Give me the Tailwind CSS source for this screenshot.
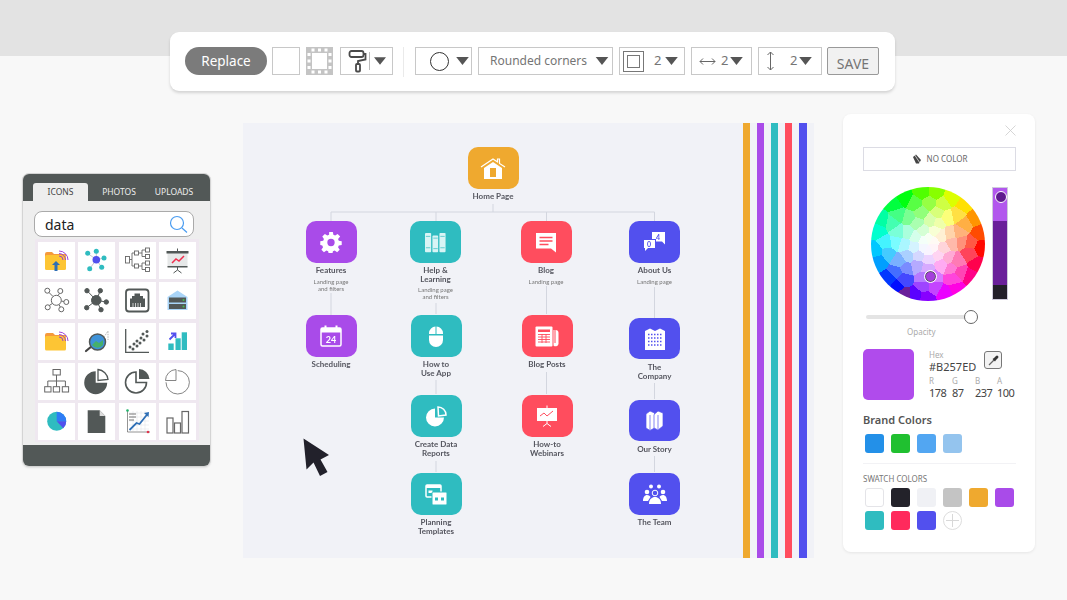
<!DOCTYPE html>
<html lang="en">
<head>
  <meta charset="UTF-8" />
  <title>Infographic editor</title>
  <script src="https://cdn.jsdelivr.net/npm/@tailwindcss/browser@4"></script>
</head>
<body class="relative w-[1067px] h-[600px] overflow-hidden bg-[#f8f8f8] font-['Noto_Sans',sans-serif]">
  <div class="h-[56px] bg-[#e3e3e3]"></div>

  <!-- Toolbar -->
  <div class="absolute left-[170px] top-[32px] w-[725px] h-[59px] pl-[15px] pt-[15px] flex items-start bg-white rounded-[9px] shadow-[0_2px_3px_rgba(0,0,0,0.15)] text-[#757575] text-[12px]">
    <div class="w-[82px] h-[28px] rounded-full bg-[#7b7b7b] text-white text-[13.500px] flex items-center justify-center">Replace</div>
    <div class="ml-[5px] w-[28px] h-[28px] border border-[#c8c8c8]"></div>
    <svg class="ml-[6px] w-[27px] h-[28px]" viewBox="0 0 27 28">
      <rect width="27" height="28" fill="#c4c4c4"/>
      <rect x="6" y="6" width="15" height="16" fill="#fff"/>
      <path d="M5.500 1.500h3v3h-3zM12 1.500h3v3h-3zM18.500 1.500h3v3h-3zM5.500 23.500h3v3h-3zM12 23.500h3v3h-3zM18.500 23.500h3v3h-3zM1.500 6h3v3h-3zM1.500 12.500h3v3h-3zM1.500 19h3v3h-3zM22.500 6h3v3h-3zM22.500 12.500h3v3h-3zM22.500 19h3v3h-3z" fill="#fff"/>
    </svg>
    <div class="ml-[7px] w-[53px] h-[28px] border border-[#c8c8c8] flex items-center">
      <svg class="ml-[7px] w-[20px] h-[24px]" viewBox="0 0 20 24" fill="none" stroke="#4a4a4a" stroke-width="1.800">
        <rect x="1.500" y="2" width="14" height="6" rx="2"/>
        <path d="M15.500 5h2v5.500l-7.500 1.500v3"/>
        <rect x="8" y="15" width="4" height="7.500" rx="1"/>
      </svg>
      <div class="ml-[1px] w-px h-[18px] bg-[#bbb]"></div>
      <svg class="ml-[4px] w-[12px] h-[8px]" viewBox="0 0 11 7"><path d="M0 0h11L5.500 7z" fill="#555"/></svg>
    </div>
    <div class="ml-[10px] w-px h-[30px] bg-[#eaeaea]"></div>
    <div class="ml-[11px] w-[57px] h-[28px] border border-[#c8c8c8] flex items-center">
      <div class="ml-[14px] w-[19px] h-[19px] rounded-full border-[1.500px] border-[#333]"></div>
      <svg class="ml-[7px] w-[13px] h-[8px]" viewBox="0 0 11 7"><path d="M0 0h11L5.500 7z" fill="#555"/></svg>
    </div>
    <div class="ml-[6px] w-[135px] h-[28px] border border-[#c8c8c8] flex items-center justify-between pl-[11px] pr-[3px] whitespace-nowrap">
      <span>Rounded corners</span>
      <svg class="w-[14px] h-[8px]" viewBox="0 0 11 7"><path d="M0 0h11L5.500 7z" fill="#555"/></svg>
    </div>
    <div class="ml-[6px] w-[66px] h-[28px] border border-[#c8c8c8] flex items-center">
      <div class="ml-[3px] w-[21px] h-[21px] border border-[#777] p-[3px]"><div class="w-full h-full border border-[#777]"></div></div>
      <span class="ml-[10px] text-[13px]">2</span>
      <svg class="ml-[4px] w-[13px] h-[8px]" viewBox="0 0 11 7"><path d="M0 0h11L5.500 7z" fill="#555"/></svg>
    </div>
    <div class="ml-[6px] w-[61px] h-[28px] border border-[#c8c8c8] flex items-center">
      <svg class="ml-[7px] w-[17px] h-[9px]" viewBox="0 0 17 9" fill="none" stroke="#666"><path d="M1 4.500h15M4 1.500l-3 3 3 3M13 1.500l3 3-3 3"/></svg>
      <span class="ml-[5px] text-[13px]">2</span>
      <svg class="ml-[2px] w-[13px] h-[8px]" viewBox="0 0 11 7"><path d="M0 0h11L5.500 7z" fill="#555"/></svg>
    </div>
    <div class="ml-[6px] w-[64px] h-[28px] border border-[#c8c8c8] flex items-center">
      <svg class="ml-[7px] w-[9px] h-[20px]" viewBox="0 0 9 20" fill="none" stroke="#666"><path d="M4.500 1v18M1.500 4l3-3 3 3M1.500 16l3 3 3-3"/></svg>
      <span class="ml-[15px] text-[13px]">2</span>
      <svg class="ml-[2px] w-[13px] h-[8px]" viewBox="0 0 11 7"><path d="M0 0h11L5.500 7z" fill="#555"/></svg>
    </div>
    <div class="ml-[5px] w-[52px] h-[28px] border border-[#999] rounded-[2px] bg-[#f1f1f1] flex items-end justify-center text-[14px] leading-[20px]">SAVE</div>
  </div>

  <!-- Icon panel -->
  <div class="absolute left-[22px] top-[173px] w-[189px] h-[294px] rounded-[7px] overflow-hidden bg-[#eeeeee] border border-[#d4d4d4] flex flex-col shadow-[0_1px_2px_rgba(0,0,0,0.1)]">
    <div class="h-[27px] bg-[#525857] flex items-end pl-[10px] text-[8.500px] text-[#eee]">
      <div class="w-[55px] h-[18px] bg-[#eeeeee] text-[#444] rounded-t-[3px] flex items-center justify-center">ICONS</div>
      <div class="w-[62px] h-[18px] flex items-center justify-center">PHOTOS</div>
      <div class="w-[48px] h-[18px] flex items-center justify-center">UPLOADS</div>
    </div>
    <div class="mt-[10px] ml-[11px] w-[160px] h-[26px] bg-white border border-[#aaa] rounded-[8px] flex items-center justify-between pl-[10px] pr-[5px] text-[14px] text-[#222]">
      <span>data</span>
      <svg class="w-[19px] h-[19px]" viewBox="0 0 19 19" fill="none" stroke="#4a9cf0" stroke-width="1.200"><circle cx="8" cy="8" r="6.500"/><path d="M13 13l5 4.500"/></svg>
    </div>
    <div class="mt-[2px] ml-[12px] w-[164px] h-[203px] bg-[#efe8f0] pt-[3px] pl-[3px] grid grid-cols-[37px_37px_37px_37px] grid-rows-[37px_37px_37px_37px_37px] gap-[3.300px]">
      <!-- folder upload -->
      <div class="bg-white"><svg viewBox="0 0 37 37"><path d="M7 12a2 2 0 0 1 2-2h5l2 2h12v3H7z" fill="#f59a3c"/><rect x="7" y="13" width="21" height="15" rx="1.500" fill="#fdc534"/><path d="M21 14a4 4 0 0 1 4 4M21 11.500a6.500 6.500 0 0 1 6.500 6.500M21 9a9 9 0 0 1 9 9" fill="none" stroke="#9333d6" stroke-width="0.900"/><path d="M18 19l4 4h-2.500v6h-3v-6H14z" fill="#2f6fb5"/></svg></div>
      <!-- network -->
      <div class="bg-white"><svg viewBox="0 0 37 37"><path d="M18.300 17.700L18.300 9.300M18.300 17.700L9.700 11.300M18.300 17.700L26 16M18.300 17.700L11.700 26.700M18.300 17.700L23.700 25.300" stroke="#c5c5cc" stroke-width="1"/><circle cx="18.300" cy="9.300" r="2.500" fill="#2fbcc0"/><circle cx="9.700" cy="11.300" r="2.500" fill="#2fbcc0"/><circle cx="26" cy="16" r="2.500" fill="#2fbcc0"/><circle cx="11.700" cy="26.700" r="2.500" fill="#2fbcc0"/><circle cx="23.700" cy="25.300" r="2.500" fill="#2fbcc0"/><circle cx="18.300" cy="17.700" r="3.800" fill="#5250ee"/></svg></div>
      <!-- tree -->
      <div class="bg-white"><svg viewBox="0 0 37 37" fill="none" stroke="#666" stroke-width="0.900"><rect x="6.500" y="14.500" width="4" height="6.500"/><rect x="15.500" y="9" width="4" height="4"/><rect x="15.500" y="22" width="4" height="4"/><rect x="26.500" y="6" width="4" height="4"/><rect x="26.500" y="12.500" width="4" height="4"/><rect x="26.500" y="19" width="4" height="4"/><rect x="26.500" y="25.500" width="4" height="4"/><path d="M10.500 17.500h2.500v-6.500h2.500M13 17.500v6.500h2.500M19.500 11h3.500M23 8h3.500M23 14.500h3.500M23 8v6.500M19.500 24h3.500M23 21h3.500M23 27.500h3.500M23 21v6.500"/></svg></div>
      <!-- board -->
      <div class="bg-white"><svg viewBox="0 0 37 37"><rect x="8.500" y="10" width="20" height="15" fill="#e6e8e8"/><rect x="7.500" y="9" width="22" height="2.500" fill="#525857"/><rect x="8.500" y="24" width="20" height="1.500" fill="#525857"/><path d="M18.500 9V6.500M18.500 25v3M18.500 28l-4 3M18.500 28l4 3" stroke="#525857" fill="none"/><path d="M13 21l4-4 3 2 5-5" stroke="#f0304f" stroke-width="1.500" fill="none"/></svg></div>
      <!-- hub outline -->
      <div class="bg-white"><svg viewBox="0 0 37 37" fill="none" stroke="#666" stroke-width="1"><circle cx="18.300" cy="18.300" r="5"/><circle cx="9.300" cy="8.700" r="2.500"/><circle cx="22.300" cy="9" r="2.500"/><circle cx="28.300" cy="20" r="2.500"/><circle cx="23.300" cy="27.300" r="2.500"/><circle cx="9.700" cy="25.300" r="2.500"/><path d="M15 14.500l-4-4M20 13.500l1.500-2M23.300 19l2.500.500M21 22.500l1.300 2.500M14.300 21.500l-3 2"/></svg></div>
      <!-- hub filled -->
      <div class="bg-white"><svg viewBox="0 0 37 37" fill="#525857" stroke="#525857" stroke-width="1"><path d="M18.300 18.300L9 8.700M18.300 18.300L22.300 8.700M18.300 18.300L28.300 20M18.300 18.300L23 27.700M18.300 18.300L8.700 25.700"/><circle cx="18.300" cy="18.300" r="4.800"/><circle cx="9" cy="8.700" r="2.200"/><circle cx="22.300" cy="8.700" r="2.200"/><circle cx="28.300" cy="20" r="2.200"/><circle cx="23" cy="27.700" r="2.200"/><circle cx="8.700" cy="25.700" r="2.200"/></svg></div>
      <!-- ethernet -->
      <div class="bg-white"><svg viewBox="0 0 37 37"><rect x="7" y="7.500" width="22.500" height="22" rx="3" fill="none" stroke="#525857" stroke-width="1.800"/><path d="M15.500 11.500h5.500v2.500h3v2.500h2V25h-15v-8.500h2V14h2.500z" fill="#525857"/><path d="M14 21v4M16.500 21v4M19 21v4M21.500 21v4" stroke="#fff" stroke-width="0.700"/></svg></div>
      <!-- server -->
      <div class="bg-white"><svg viewBox="0 0 37 37"><path d="M8.500 15l10-6.500 10 6.500v13h-20z" fill="#a9d4f7"/><rect x="10" y="15.500" width="17" height="5" fill="#525857"/><rect x="10" y="22" width="17" height="5" fill="#525857"/><circle cx="24.500" cy="18" r="1" fill="#43c04b"/><circle cx="24.500" cy="24.500" r="1" fill="#43c04b"/></svg></div>
      <!-- folder -->
      <div class="bg-white"><svg viewBox="0 0 37 37"><path d="M7 12a2 2 0 0 1 2-2h6l2 2h11v3H7z" fill="#f59a3c"/><rect x="7" y="13" width="21" height="14.500" rx="1.500" fill="#fdc534"/><path d="M21 14a4 4 0 0 1 4 4M21 11.500a6.500 6.500 0 0 1 6.500 6.500M21 9a9 9 0 0 1 9 9" fill="none" stroke="#9333d6" stroke-width="0.900"/></svg></div>
      <!-- magnifier -->
      <div class="bg-white"><svg viewBox="0 0 37 37"><path d="M14 23l-6 5" stroke="#444" stroke-width="2.200" stroke-linecap="round"/><circle cx="19.500" cy="19" r="8" fill="#3e92d8" stroke="#525857" stroke-width="1.500"/><path d="M14 22l4-4 3 2 4-3v5a7 7 0 0 1-11 0z" fill="#46b06a"/><path d="M26 14l4-6v9" fill="none" stroke="#999" stroke-width="0.700" stroke-dasharray="1.500 1"/></svg></div>
      <!-- scatter -->
      <div class="bg-white"><svg viewBox="0 0 37 37"><path d="M6.700 6v23.300H30" fill="none" stroke="#525857" stroke-width="1.300"/><g fill="#525857"><circle cx="11" cy="24" r="1.500"/><circle cx="14" cy="26" r="1.500"/><circle cx="15" cy="21" r="1.500"/><circle cx="18" cy="23" r="1.500"/><circle cx="18" cy="18" r="1.500"/><circle cx="21" cy="20" r="1.500"/><circle cx="22" cy="15" r="1.500"/><circle cx="25" cy="17" r="1.500"/><circle cx="24" cy="11" r="1.500"/><circle cx="28" cy="13" r="1.500"/><circle cx="28" cy="8.500" r="1.500"/></g></svg></div>
      <!-- bars up -->
      <div class="bg-white"><svg viewBox="0 0 37 37"><rect x="9.300" y="20.500" width="5.400" height="6.500" fill="#2fbcc0"/><rect x="16.500" y="15.300" width="5.200" height="11.700" fill="#2fbcc0"/><rect x="22.700" y="9.300" width="5.300" height="17.700" fill="#2fbcc0"/><path d="M10.500 16.500l5-5M12 10.500h4.500v4.500" fill="none" stroke="#5250ee" stroke-width="1.800"/></svg></div>
      <!-- org chart -->
      <div class="bg-white"><svg viewBox="0 0 37 37" fill="none" stroke="#666" stroke-width="1"><rect x="15" y="6.500" width="7.300" height="5.500"/><rect x="6.700" y="23.700" width="6.300" height="5.300"/><rect x="15.300" y="23.700" width="6.300" height="5.300"/><rect x="24.300" y="23.700" width="6.300" height="5.300"/><path d="M18.500 12v11.700M9.800 23.700V18h17.600v5.700"/></svg></div>
      <!-- pie filled -->
      <div class="bg-white"><svg viewBox="0 0 37 37"><path d="M17.700 8.200A11.500 11.500 0 1 0 29.200 19.700H17.700z" fill="#525857"/><path d="M20 6.500A11 11 0 0 1 30 16.500L20 17.500z" fill="#fff" stroke="#525857" stroke-width="1.300"/></svg></div>
      <!-- pie outline -->
      <div class="bg-white"><svg viewBox="0 0 37 37"><path d="M17 9a10.500 10.500 0 1 0 10.500 10.500H17z" fill="#fff" stroke="#525857" stroke-width="1.600"/><path d="M20 6A11 11 0 0 1 30.500 16H20z" fill="#525857"/></svg></div>
      <!-- pie thin -->
      <div class="bg-white"><svg viewBox="0 0 37 37" fill="none" stroke="#777" stroke-width="0.900"><path d="M18.700 7.600a11.700 11.700 0 1 1-11.700 11.700"/><path d="M17 6.500V17.500H6.500A11 11 0 0 1 17 6.500z"/></svg></div>
      <!-- pie colour -->
      <div class="bg-white"><svg viewBox="0 0 37 37"><circle cx="18.700" cy="18.300" r="9.500" fill="#2fbcc0"/><path d="M18.700 18.300V8.800a9.500 9.500 0 0 1 9.500 9.500z" fill="#2e7cf6"/><path d="M18.700 18.300h9.500a9.500 9.500 0 0 1-3 7z" fill="#5250ee"/></svg></div>
      <!-- document -->
      <div class="bg-white"><svg viewBox="0 0 37 37"><path d="M9.700 7.300h12l5.600 5.600V30H9.700z" fill="#525857"/><path d="M21.700 7.300v5.600h5.600z" fill="#ddd"/></svg></div>
      <!-- chart trend -->
      <div class="bg-white"><svg viewBox="0 0 37 37"><path d="M10 10h20M10 14h20M10 18h20M10 22h20M10 26h20M14 8v20M18 8v20M22 8v20M26 8v20" stroke="#dde3e6" stroke-width="0.500"/><path d="M8.500 8v21H31" fill="none" stroke="#666" stroke-width="0.700"/><path d="M10 11h7M10 14h7M10 17h5" stroke="#666" stroke-width="0.900"/><path d="M10.500 27l7-7 3 1 8-10" fill="none" stroke="#2f6fb5" stroke-width="1.800"/><path d="M25 10l5-1-.5 5z" fill="#2f6fb5"/><circle cx="8.500" cy="7.500" r="1.300" fill="#1fb36b"/><circle cx="29" cy="29" r="1.300" fill="#e0344c"/></svg></div>
      <!-- bars outline -->
      <div class="bg-white"><svg viewBox="0 0 37 37" fill="none" stroke="#666" stroke-width="1.200"><rect x="8" y="15" width="6" height="15"/><rect x="15.500" y="20" width="6" height="10"/><rect x="23" y="8.500" width="6.500" height="21.500"/></svg></div>
    </div>
    <div class="mt-auto h-[21px] bg-[#525857]"></div>
  </div>

  <!-- Canvas -->
  <div class="absolute left-[243px] top-[123px] w-[571px] h-[435px] bg-[#f1f2f7] text-[#55565f] font-['Lato',sans-serif] text-[8px] leading-[8.700px] font-bold text-center blur-[0.35px]">
    <svg class="absolute inset-0 w-[571px] h-[435px]" viewBox="0 0 571 435" fill="none" stroke="#d3d6df" stroke-width="1">
      <path d="M250 81v8M88 98V89H411.500V98M193 89v9M303.500 89v9"/>
      <path d="M88 170v22M193 180v11M303.500 163v28M411.500 164v31M193 257v14M303.500 249v22M411.500 260v16M193 338v11M411.500 333v16"/>
    </svg>
    <div class="absolute left-[499.500px] top-0 h-[435px] w-[64px] flex justify-between">
      <div class="w-[7px] bg-[#efa92f]"></div>
      <div class="w-[7px] bg-[#a94be9]"></div>
      <div class="w-[6.500px] bg-[#2fbcc0]"></div>
      <div class="w-[7px] bg-[#ff4d5e]"></div>
      <div class="w-[7.500px] bg-[#5250ee]"></div>
    </div>

    <!-- Home Page -->
    <div class="absolute left-[210px] top-[24px] w-[80px] flex flex-col items-center">
      <div class="w-[51px] h-[42px] rounded-[10px] bg-[#efa92f] flex items-center justify-center">
        <svg class="w-[26px] h-[23px]" viewBox="0 0 26 23"><path d="M1 10L13 2l4.500 3V2h2v4.500L25 10" fill="none" stroke="#fff" stroke-width="1.200"/><path d="M4 11l9-6 9 6v11H4z" fill="#fff"/><rect x="10" y="11" width="6" height="9" fill="#efa92f"/></svg>
      </div>
      <div class="mt-[3px]">Home Page</div>
    </div>
    <!-- Features -->
    <div class="absolute left-[48px] top-[98px] w-[80px] flex flex-col items-center">
      <div class="w-[51px] h-[42px] rounded-[10px] bg-[#a94be9] flex items-center justify-center">
        <svg class="w-[22px] h-[22px]" viewBox="0 0 24 24"><path fill="#fff" fill-rule="evenodd" d="M10 1h4l.6 3.200 1.900.8 2.700-1.800 2.800 2.800L19.700 8.700l.8 1.900 3.200.6v4l-3.200.6-.8 1.900 1.800 2.700-2.800 2.800-2.700-1.800-1.900.8-.6 2.800h-4l-.6-2.800-1.900-.8-2.700 1.800-2.800-2.800 1.800-2.700-.8-1.900L.3 15.200v-4l3.200-.6.8-1.900L2.500 6 5.300 3.200 8 5l1.900-.8zM12 8.500a4 4 0 1 0 0 8 4 4 0 0 0 0-8z"/></svg>
      </div>
      <div class="mt-[3px]">Features</div>
      <div class="mt-[3px] font-normal text-[6px] leading-[7px] text-[#777]">Landing page<br>and filters</div>
    </div>
    <!-- Help & Learning -->
    <div class="absolute left-[152.500px] top-[98px] w-[80px] flex flex-col items-center">
      <div class="w-[51px] h-[42px] rounded-[10px] bg-[#2fbcc0] flex items-center justify-center">
        <svg class="w-[21px] h-[21px]" viewBox="0 0 24 22" fill="#d9f4f5"><rect x="0" y="0" width="7" height="22" rx="1"/><rect x="8.500" y="3" width="6.500" height="19" rx="1"/><rect x="16.500" y="0" width="7" height="22" rx="1"/><path d="M1 4h5M1 17h5M9.500 6h5M9.500 18h5M17.500 4h5M17.500 17h5" stroke="#2fbcc0" stroke-width="0.800"/></svg>
      </div>
      <div class="mt-[3px]">Help &amp;<br>Learning</div>
      <div class="mt-[3px] font-normal text-[6px] leading-[7px] text-[#777]">Landing page<br>and filters</div>
    </div>
    <!-- Blog -->
    <div class="absolute left-[263px] top-[98px] w-[80px] flex flex-col items-center">
      <div class="w-[51px] h-[42px] rounded-[10px] bg-[#ff4d5e] flex items-center justify-center">
        <svg class="w-[22px] h-[21px]" viewBox="0 0 22 21"><path d="M1 1h20v15.500l0 4-5-4H1z" fill="#fff"/><path d="M4.500 5.500h13M4.500 9h13M4.500 12.500h9" stroke="#ff4d5e" stroke-width="1.500"/></svg>
      </div>
      <div class="mt-[3px]">Blog</div>
      <div class="mt-[3px] font-normal text-[6px] leading-[7px] text-[#777]">Landing page</div>
    </div>
    <!-- About Us -->
    <div class="absolute left-[371.500px] top-[98px] w-[80px] flex flex-col items-center">
      <div class="w-[51px] h-[42px] rounded-[10px] bg-[#5250ee] flex items-center justify-center">
        <svg class="w-[23px] h-[22px]" viewBox="0 0 23 22"><path d="M9 1h13v9.500l0 3-3-3h-6V8H9z" fill="#fff"/><path d="M1 9h11v8H5l-3 3v-3H1z" fill="#fff"/><text x="15" y="8.500" font-size="7" fill="#5250ee" text-anchor="middle" font-weight="700">4</text><text x="6" y="16" font-size="7" fill="#5250ee" text-anchor="middle" font-weight="700">0</text></svg>
      </div>
      <div class="mt-[3px]">About Us</div>
      <div class="mt-[3px] font-normal text-[6px] leading-[7px] text-[#777]">Landing page</div>
    </div>
    <!-- Scheduling -->
    <div class="absolute left-[48px] top-[192px] w-[80px] flex flex-col items-center">
      <div class="w-[51px] h-[42px] rounded-[10px] bg-[#a94be9] flex items-center justify-center">
        <svg class="w-[22px] h-[22px]" viewBox="0 0 22 22"><rect x="1" y="3" width="20" height="18" rx="1.500" fill="none" stroke="#fff" stroke-width="1.500"/><rect x="1" y="3" width="20" height="4.500" fill="#fff"/><rect x="4.500" y="0.500" width="2" height="4.500" fill="#fff"/><rect x="15.500" y="0.500" width="2" height="4.500" fill="#fff"/><text x="11" y="17.500" font-size="9" font-weight="700" fill="#fff" text-anchor="middle">24</text></svg>
      </div>
      <div class="mt-[3px]">Scheduling</div>
    </div>
    <!-- How to Use App -->
    <div class="absolute left-[153px] top-[192px] w-[80px] flex flex-col items-center">
      <div class="w-[51px] h-[42px] rounded-[10px] bg-[#2fbcc0] flex items-center justify-center">
        <svg class="w-[16px] h-[21px]" viewBox="0 0 16 21" fill="#fff"><path d="M1 8V7a7 7 0 0 1 6.500-6.500V8zM8.500 .5A7 7 0 0 1 15 7v1H8.500z"/><path d="M1 9.500h14V14a7 7 0 0 1-14 0z"/></svg>
      </div>
      <div class="mt-[3px]">How to<br>Use App</div>
    </div>
    <!-- Blog Posts -->
    <div class="absolute left-[264px] top-[192px] w-[80px] flex flex-col items-center">
      <div class="w-[51px] h-[42px] rounded-[10px] bg-[#ff4d5e] flex items-center justify-center">
        <svg class="w-[24px] h-[21px]" viewBox="0 0 24 21"><rect x="0.500" y="0.500" width="17" height="20" rx="1" fill="#fff"/><path d="M18.500 4h2a3 3 0 0 1 3 3v11a3 3 0 0 1-5 1.500z" fill="#fff"/><path d="M20 4v13" stroke="#ff4d5e"/><rect x="3" y="3.500" width="12" height="2.500" fill="#ff4d5e"/><path d="M3 8.500h12M3 11h12M3 13.500h12M3 16h12M7 8v9M11 8v9" stroke="#ff4d5e" stroke-width="0.900"/></svg>
      </div>
      <div class="mt-[3px]">Blog Posts</div>
    </div>
    <!-- The Company -->
    <div class="absolute left-[371.500px] top-[195px] w-[80px] flex flex-col items-center">
      <div class="w-[51px] h-[41px] rounded-[10px] bg-[#5250ee] flex items-center justify-center">
        <svg class="w-[20px] h-[22px]" viewBox="0 0 20 22"><path d="M0 3l5-2.500 5 2.500 5-2.500 5 2.500v19H0z" fill="#fff"/><path d="M3 6.500h14M3 10h14M3 13.500h14M3 17h14" stroke="#5250ee" stroke-width="1.500" stroke-dasharray="1.500 1.500"/></svg>
      </div>
      <div class="mt-[4px]">The<br>Company</div>
    </div>
    <!-- Create Data Reports -->
    <div class="absolute left-[153px] top-[272px] w-[80px] flex flex-col items-center">
      <div class="w-[51px] h-[42px] rounded-[10px] bg-[#2fbcc0] flex items-center justify-center">
        <svg class="w-[22px] h-[21px]" viewBox="0 0 22 21"><path d="M10 2.500a9 9 0 1 0 9 9h-9z" fill="#fff"/><path d="M13 1a8 8 0 0 1 8 8l-7.500 1z" fill="none" stroke="#fff" stroke-width="1.500"/></svg>
      </div>
      <div class="mt-[3px]">Create Data<br>Reports</div>
    </div>
    <!-- How-to Webinars -->
    <div class="absolute left-[264px] top-[272px] w-[80px] flex flex-col items-center">
      <div class="w-[51px] h-[42px] rounded-[10px] bg-[#ff4d5e] flex items-center justify-center">
        <svg class="w-[22px] h-[22px]" viewBox="0 0 22 22"><rect x="1" y="3" width="20" height="13" fill="#fff"/><path d="M11 3V0.500M11 16v2.500M11 18.500l-4 3M11 18.500l4 3" stroke="#fff" fill="none"/><path d="M4 11l4-3 3 3 6-5" stroke="#ff4d5e" fill="none"/></svg>
      </div>
      <div class="mt-[3px]">How-to<br>Webinars</div>
    </div>
    <!-- Our Story -->
    <div class="absolute left-[371.500px] top-[277px] w-[80px] flex flex-col items-center">
      <div class="w-[51px] h-[41px] rounded-[10px] bg-[#5250ee] flex items-center justify-center">
        <svg class="w-[19px] h-[21px]" viewBox="0 0 19 21" fill="#fff" stroke="#5250ee" stroke-width="0.700"><path d="M1 4l4-3 4.500 2v15L5 20.500 1 18z"/><path d="M9 4.500l4-3.500 5 2v13l-5 4-4-2z"/><path d="M5 5v15M13 5v14" fill="none"/></svg>
      </div>
      <div class="mt-[4px]">Our Story</div>
    </div>
    <!-- Planning Templates -->
    <div class="absolute left-[153px] top-[350px] w-[80px] flex flex-col items-center">
      <div class="w-[51px] h-[42px] rounded-[10px] bg-[#2fbcc0] flex items-center justify-center">
        <svg class="w-[22px] h-[21px]" viewBox="0 0 22 21"><rect x="1" y="1" width="15" height="12" rx="1" fill="none" stroke="#fff" stroke-width="1.500"/><rect x="1" y="1" width="15" height="3" fill="#fff"/><rect x="3.500" y="6.500" width="4" height="2.500" fill="#fff"/><rect x="7" y="8" width="15" height="13" rx="1" fill="#fff" stroke="#2fbcc0"/><rect x="10" y="13.500" width="3" height="3" fill="#2fbcc0"/><rect x="16" y="13.500" width="3" height="3" fill="#2fbcc0"/></svg>
      </div>
      <div class="mt-[3px]">Planning<br>Templates</div>
    </div>
    <!-- The Team -->
    <div class="absolute left-[371.500px] top-[350px] w-[80px] flex flex-col items-center">
      <div class="w-[51px] h-[42px] rounded-[10px] bg-[#5250ee] flex items-center justify-center">
        <svg class="w-[24px] h-[21px]" viewBox="0 0 24 21" fill="#fff"><circle cx="8" cy="2.500" r="2"/><circle cx="16" cy="2.500" r="2"/><circle cx="4" cy="8" r="2.300"/><circle cx="20" cy="8" r="2.300"/><circle cx="12" cy="9" r="2.800" fill="none" stroke="#fff"/><path d="M0 17c0-4 2-6 4-6s3 1 3.500 2L5 17zM24 17c0-4-2-6-4-6s-3 1-3.500 2L19 17z"/><path d="M6 20c0-5 3-7 6-7s6 2 6 7z"/></svg>
      </div>
      <div class="mt-[3px]">The Team</div>
    </div>
    <!-- Cursor -->
    <svg class="absolute left-[57px] top-[312px] w-[32px] h-[42px]" viewBox="0 0 32 42"><path d="M3.500 3.500L29 20l-8.500 4.500L27.500 37l-7.500 4-6.500-13.500L6.500 34.500z" fill="#22212b"/></svg>
  </div>

  <!-- Colour panel -->
  <div class="absolute left-[843px] top-[114px] w-[192px] h-[438px] px-[20px] rounded-[8px] bg-white shadow-[0_1px_3px_rgba(0,0,0,0.08)] text-[#444]">
    <svg class="absolute left-[162px] top-[11px] w-[11px] h-[11px]" viewBox="0 0 11 11" stroke="#ccc" stroke-width="0.800"><path d="M.5.5l10 10M10.500.5l-10 10"/></svg>
    <div class="mt-[33px] w-[153px] h-[24px] border border-[#dcdce4] flex items-center justify-center text-[8px] text-[#666]">
      <svg class="mr-[5px] w-[10px] h-[10px]" viewBox="0 0 10 10"><path d="M1 3l3-2.500L9 6 7 9.500H4z" fill="#444"/><path d="M2 0l6 9" stroke="#fff" stroke-width="0.700"/></svg>
      NO COLOR
    </div>
    <div class="mt-[16px] flex">
      <canvas id="wheel" width="114" height="114" class="ml-[8px] w-[114px] h-[114px] rounded-full"></canvas>
      <div class="relative ml-[7px] w-[16px] h-[113px] flex flex-col border border-[#cfcbdc]">
        <div class="h-[33px] bg-[#b257ed]"></div>
        <div class="h-[64px] bg-[#6a1f9a]"></div>
        <div class="flex-1 bg-[#231f2a]"></div>
        <div class="absolute left-[1.500px] top-[2.500px] w-[12px] h-[12px] rounded-full bg-[#5f1a8f] border border-white"></div>
      </div>
    </div>
    <div class="mt-[9px] ml-[3px] flex items-center">
      <div class="w-[100px] h-[4px] rounded-full bg-[#e4e4e4]"></div>
      <div class="-ml-[2px] w-[14px] h-[14px] rounded-full bg-white border-[1.500px] border-[#666]"></div>
    </div>
    <div class="mt-[1.500px] ml-[44px] text-[8px] leading-[12px] text-[#aaa]">Opacity</div>
    <div class="mt-[11.500px] flex">
      <div class="w-[51px] h-[51px] rounded-[5px] bg-[#b04bec]"></div>
      <div class="ml-[15px] w-[86px]">
        <div class="flex items-start justify-between">
          <div>
            <div class="text-[8px] leading-[11px] text-[#aaa]">Hex</div>
            <div class="text-[11px] leading-[13px] text-[#444]">#B257ED</div>
          </div>
          <div class="mt-[2px] mr-[13px] w-[18px] h-[18px] rounded-[3px] border border-[#777] bg-[#f3f3f3] flex items-center justify-center">
            <svg class="w-[11px] h-[11px]" viewBox="0 0 11 11"><path d="M1 10l5-5" stroke="#666" stroke-width="1.300"/><path d="M4.500 4l2.500 2.500 1-1.500 2-2a1.400 1.400 0 0 0-2-2l-2 2z" fill="#333"/></svg>
          </div>
        </div>
        <div class="mt-[3px] grid grid-cols-[23px_23px_22px_20px] text-[8px] leading-[10px] text-[#aaa]">
          <div>R</div><div>G</div><div>B</div><div>A</div>
        </div>
        <div class="grid grid-cols-[23px_23px_22px_20px] text-[11px] tracking-[-0.600px] leading-[13px] text-[#444] whitespace-nowrap">
          <div>178</div><div>87</div><div>237</div><div>100</div>
        </div>
      </div>
    </div>
    <div class="mt-[12px] text-[11px] leading-[15px] font-semibold text-[#555]">Brand Colors</div>
    <div class="mt-[7px] ml-[2px] flex gap-[7px]">
      <div class="w-[19px] h-[19px] rounded-[3px] bg-[#2390e8]"></div>
      <div class="w-[19px] h-[19px] rounded-[3px] bg-[#20c030]"></div>
      <div class="w-[19px] h-[19px] rounded-[3px] bg-[#52a6f2]"></div>
      <div class="w-[19px] h-[19px] rounded-[3px] bg-[#94c4ee]"></div>
    </div>
    <div class="mt-[10px] w-[153px] h-px bg-[#f2f2f5]"></div>
    <div class="mt-[9px] text-[8px] leading-[11px] text-[#777]">SWATCH COLORS</div>
    <div class="mt-[4px] ml-[2px] w-[156px] flex flex-wrap gap-x-[7px] gap-y-[4px]">
      <div class="w-[19px] h-[19px] rounded-[3px] bg-white border border-[#e4e4e8]"></div>
      <div class="w-[19px] h-[19px] rounded-[3px] bg-[#23222a]"></div>
      <div class="w-[19px] h-[19px] rounded-[3px] bg-[#f0f1f5]"></div>
      <div class="w-[19px] h-[19px] rounded-[3px] bg-[#c4c4c4]"></div>
      <div class="w-[19px] h-[19px] rounded-[3px] bg-[#efa92f]"></div>
      <div class="w-[19px] h-[19px] rounded-[3px] bg-[#a94be9]"></div>
      <div class="w-[19px] h-[19px] rounded-[3px] bg-[#2fbcc0]"></div>
      <div class="w-[19px] h-[19px] rounded-[3px] bg-[#ff2a5c]"></div>
      <div class="w-[19px] h-[19px] rounded-[3px] bg-[#5250ee]"></div>
      <div class="w-[19px] h-[19px] rounded-full border border-[#ddd] flex items-center justify-center">
        <svg class="w-[13px] h-[13px]" viewBox="0 0 13 13" stroke="#d8d8d8"><path d="M6.500 0v13M0 6.500h13"/></svg>
      </div>
    </div>
  </div>

  <!-- Marker on the wheel -->
  <div class="absolute left-[925px] top-[270.500px] w-[11px] h-[11px] rounded-full bg-[#a53fdc] border border-[#555] outline outline-white"></div>

  <script>
    // colour wheel: nearest-seed cells, hue by angle, lightness by radius
    const cv = document.getElementById('wheel');
    const ctx = cv.getContext('2d');
    const seeds = [];
    const rings = [0.1, 0.26, 0.42, 0.58, 0.74, 0.92];
    rings.forEach((r, i) => {
      const n = Math.round(4 + r * 18);
      for (let k = 0; k < n; k++) {
        const a = (k + (i % 2) * 0.5 + Math.sin(i * 7 + k * 3) * 0.22) / n * Math.PI * 2;
        const deg = a * 180 / Math.PI;
        const hue = ((95 - deg) % 360 + 360) % 360;
        const light = Math.max(50, 100 - 56 * Math.pow(r, 1.4));
        let color = 'hsl(' + hue + ',100%,' + light + '%)';
        seeds.push({ x: Math.sin(a) * r * 57, y: -Math.cos(a) * r * 57, color });
      }
    });
    seeds.push({ x: -25, y: 51, color: '#6a1f9a' });
    for (let y = 0; y < 114; y++) {
      for (let x = 0; x < 114; x++) {
        let best = seeds[0], d = 1e9;
        for (const s of seeds) {
          const q = (x - 57 - s.x) ** 2 + (y - 57 - s.y) ** 2;
          if (q < d) { d = q; best = s; }
        }
        ctx.fillStyle = best.color;
        ctx.fillRect(x, y, 1, 1);
      }
    }
  </script>
</body>
</html>
